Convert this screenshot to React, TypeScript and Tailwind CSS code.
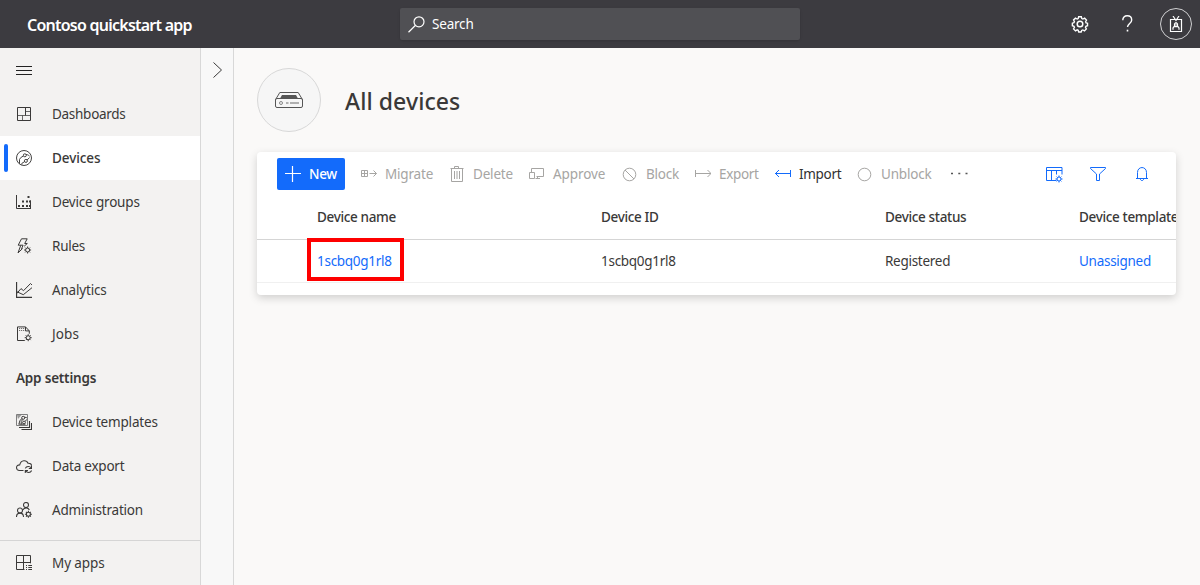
import React from "react";

type IconProps = { children: React.ReactNode; className?: string; size?: number; width?: number };

function Icon({ children, className = "", size = 16, width = 1 }: IconProps) {
  return (
    <svg
      width={size}
      height={size}
      viewBox={`0 0 ${size} ${size}`}
      fill="none"
      stroke="currentColor"
      strokeWidth={width}
      className={`block shrink-0 ${className}`}
    >
      {children}
    </svg>
  );
}

function Gear({ x, y }: { x: number; y: number }) {
  return (
    <g transform={`translate(${x} ${y})`}>
      <circle r="2" />
      <path d="M0-3.5v1.5M0 2v1.5M-3.5 0h1.5M2 0h1.5M-2.4-2.4l1 1M1.4 1.4l1 1M2.4-2.4l-1 1M-1.4 1.4l-1 1" />
    </g>
  );
}

const DashboardsIcon = (
  <Icon>
    <path d="M1.5 1.5h13v13h-13zM9.5 1.5v8" />
    <path d="M1.5 9.5h13M6.5 9.5v5M9.5 5.5h5" strokeOpacity="0.75" />
  </Icon>
);
const DevicesIcon = (
  <Icon width={0.95}>
    <circle cx="8" cy="8" r="7.5" />
    <circle cx="8.8" cy="5.3" r="1.5" />
    <circle cx="9.9" cy="10.9" r="1.5" />
    <path d="M7.4 6Q4 7.5 3.5 9.5v4.2M5.8 14.6v-1.2l2.7-1.7M10 4.6c2.2-.2 3 1.4 3.6 1.5M11.1 9.9l2.5-2.3" />
  </Icon>
);
const DeviceGroupsIcon = (
  <Icon>
    <path d="M.5 1v13.5h14.5M14.5 6.5v8" />
    <path d="M2 11h2v2H2zM6 11h2v2H6zM10 11h2v2h-2zM6 6.5h2v2H6zM10 6.5h2v2h-2zM11.5 2h2v2h-2zM13 11h2v2h-2zM13 6.5h2v2h-2z" fill="currentColor" stroke="none" />
  </Icon>
);
const RulesIcon = (
  <Icon width={1}>
    <path d="M5.5.8h5.7L8.7 5.5h2.6L8.2 8.2M5.5.8 2.2 7.2h2.6L2 14.9l4.6-4.4M4.8 7.2h2.3l-1.7 4" />
    <Gear x={11.6} y={12} />
  </Icon>
);
const AnalyticsIcon = (
  <Icon>
    <path d="M.5 0v15.5H16" strokeWidth="1.3" />
    <path d="M.8 11.5 5 6.6 7.5 8.7 14.5 1.5 16 3M.8 9.7l6.5 3 8.7-7" />
  </Icon>
);
const JobsIcon = (
  <Icon width={1}>
    <path d="M8.8 14.5H1.5V.9h8l3.8 4v2.8M9.5.9v4h3.8" />
    <path d="M3 2.5h1.2M5 2.5h1.2M7 2.5h1.2M3 4.5h1.2M5 4.5h1.2M7 4.5h1.2" strokeOpacity="0.7" />
    <Gear x={12.2} y={11.7} />
  </Icon>
);
const TemplatesIcon = (
  <Icon width={0.95}>
    <path d="M.5.5h11v11H.5z" stroke="#777" />
    <path d="M1 1h4.5L2 5z" fill="#999" stroke="none" />
    <circle cx="7.2" cy="3.8" r="1.5" />
    <circle cx="8" cy="8.5" r="1.4" />
    <path d="M6 4.7Q3.3 5.5 3 10M6.8 5.4Q4.5 7 5.2 10.5M9 7.3l2-1.8M8.3 3.1l2.5.6M2.5 10.2h7" />
    <path d="M13.5 7v6.5H3M15.5 9v6.5H5.5" strokeWidth="1.1" />
  </Icon>
);
const ExportIcon = (
  <Icon width={1.05}>
    <path d="M7.5 12.5h-4C-.5 12.3-.5 6.7 3.7 6.9 5 1.3 10.7 1.8 12 5.2c2-.2 3.6.9 3.5 2.6" />
    <path d="M9.3 10.4c1-2.6 4.6-2.6 6-.3M15.5 7.8v2.6h-2.7M15.6 12.5c-1.1 2.5-4.5 2.5-6 .2M9.3 15.1v-2.6H12" />
  </Icon>
);
const AdminIcon = (
  <Icon width={1.05}>
    <circle cx="10" cy="3" r="2.5" />
    <circle cx="4" cy="8.5" r="2.5" />
    <path d="M.5 15c0-5.2 7-5.2 7 0M6.8 8c1.4-2.7 5.6-2.7 6.5 0" />
    <Gear x={12.4} y={12.3} />
  </Icon>
);
const AppsIcon = (
  <Icon>
    <path d="M8.5 14.5h-8V.5h14v7.8M.5 7.5h14M7.5.5v14" />
    <path d="M10 10.5h1M12.3 10.5H16M10 12.5h1M12.3 12.5H16M10 14.5h1M12.3 14.5H16" />
  </Icon>
);

type NavItem = { label: string; icon: React.ReactNode; track: string; active?: boolean };

const navItems: NavItem[] = [
  { label: "Dashboards", icon: DashboardsIcon, track: "tracking-[-0.28px]" },
  { label: "Devices", icon: DevicesIcon, track: "tracking-[-0.1px]", active: true },
  { label: "Device groups", icon: DeviceGroupsIcon, track: "tracking-[-0.18px]" },
  { label: "Rules", icon: RulesIcon, track: "tracking-[-0.25px]" },
  { label: "Analytics", icon: AnalyticsIcon, track: "tracking-[-0.18px]" },
  { label: "Jobs", icon: JobsIcon, track: "tracking-[0.1px]" },
];
const settingsItems: NavItem[] = [
  { label: "Device templates", icon: TemplatesIcon, track: "tracking-[-0.18px]" },
  { label: "Data export", icon: ExportIcon, track: "tracking-[-0.22px]" },
  { label: "Administration", icon: AdminIcon, track: "tracking-[-0.22px]" },
];

function NavRow({ item }: { item: NavItem }) {
  return (
    <a className={`flex h-11 items-center ${item.active ? "bg-white font-medium" : ""}`}>
      <span className={`ml-1 h-7 w-1 rounded-xs ${item.active ? "bg-[#136bfb]" : ""}`} />
      <span className="ml-2">{item.icon}</span>
      <span className={`ml-5 whitespace-nowrap ${item.track}`}>{item.label}</span>
    </a>
  );
}

const commands = [
  {
    label: "Migrate", box: "w-[88px]", track: "tracking-[-0.18px]",
    icon: <Icon><path d="M.5 4.5h6v6h-6zM3.5 4.5v6M.5 7.5h6M8.5 7.5h7M12.5 4.5l3 3-3 3" /></Icon>,
  },
  {
    label: "Delete", box: "w-[80px]", track: "tracking-[-0.18px]",
    icon: <Icon><path d="M1.5 2.5h13M5.5 2.5v-2h4v2M2.5 2.5v13h11v-13M5.5 5v8M8 5v8M10.5 5v8" /></Icon>,
  },
  {
    label: "Approve", box: "w-[93px]", track: "tracking-[-0.1px]",
    icon: <Icon><path d="M2.5 6V2.5h12v8h-7M.5 6.5h5v6h-5zM8.5 10.5v2M6.5 12.5H11" /></Icon>,
  },
  {
    label: "Block", box: "w-[73px]", track: "tracking-[-0.22px]",
    icon: <Icon><circle cx="7.5" cy="8.5" r="6.3" /><path d="m3 4 9 9" /></Icon>,
  },
  {
    label: "Export", box: "w-[80px]", track: "tracking-[-0.32px]",
    icon: <Icon><path d="M.5 4v7M1 7.5h15M12.5 4 16 7.5 12.5 11" /></Icon>,
  },
  {
    label: "Import", box: "w-[82px]", track: "tracking-[-0.32px]", enabled: true,
    icon: <Icon><path d="M15.5 4v7M0 7.5h15M4 4 .5 7.5 4 11" stroke="#136bfb" /></Icon>,
  },
  {
    label: "Unblock", box: "w-[94px]", track: "tracking-[-0.18px]",
    icon: <Icon><circle cx="7.5" cy="8.5" r="6.3" /></Icon>,
  },
];

export default function App() {
  return (
    <div className="flex h-[585px] w-[1200px] flex-col overflow-hidden bg-[#faf9f8] font-['Noto_Sans','Open_Sans',sans-serif] text-[13.5px] leading-5 text-[#3a3938]">
      <header className="flex h-12 shrink-0 items-center bg-[#3c3b40] text-white">
        <h1 className="w-[400px] pl-[27px] pt-px text-base font-semibold tracking-[-0.76px]">Contoso quickstart app</h1>
        <div className="flex h-8 w-[400px] items-center rounded-xs bg-[#505054] pl-2 shadow-sm">
          <Icon size={17} width={1.2}>
            <circle cx="11" cy="5.8" r="5" />
            <path d="M7.3 9.5.5 16.2" />
          </Icon>
          <span className="ml-[7px] tracking-[-0.2px]">Search</span>
        </div>
        <div className="ml-auto flex items-center pr-2">
          <Icon size={18} width={1.5} className="-mr-px">
            <circle cx="9" cy="9" r="2.8" />
            <path d="M7.5 1.2h3l.5 2 1.2.5 1.9-1 2.1 2.1-1 1.9.5 1.1 1.6.4v2.8l-1.8.6-.5 1.1 1 1.8-2.1 2.2-1.8-1-1.2.5-.6 1.7H7.6l-.6-1.8-1.1-.5-1.8 1.1-2.2-2.1 1-1.9-.5-1.1-1.8-.6V8.2l1.8-.5.5-1.2-1-1.8 2.1-2 1.9 1L7 3.2z" transform="translate(.8 .7) scale(.91)" />
          </Icon>
          <Icon size={18} className="ml-[30px]" width={1.4}>
            <path d="M4.8 5.2C4.8 2.5 6.5.8 9.2.8s4.5 1.7 4.5 4.1c0 3.4-4.2 3.7-4.2 7.2" />
            <path d="M9.5 14.7v1.8" strokeWidth="1.6" />
          </Icon>
          <span className="ml-6 flex size-8 items-center justify-center rounded-full border border-[#d0d0d2]">
            <Icon width={1.2}>
              <path d="M2.5 3.5h11v12h-11z" />
              <path d="m5 0 3 4.5L11 0M5 13.8V12l1-1.3h4l1 1.3v1.8M6.5 11V8l1-1.2h1l1 1.2v3M6.5 9h3" />
            </Icon>
          </span>
        </div>
      </header>

      <div className="flex min-h-0 flex-1">
        <nav className="flex w-[201px] shrink-0 flex-col border-r border-[#d8d8d8] bg-[#f3f2f1]">
          <div className="flex h-11 items-center pl-4">
            <Icon><path d="M0 4.5h16M0 8.5h16M0 12.5h16" stroke="#222" /></Icon>
          </div>
          {navItems.map((item) => <NavRow key={item.label} item={item} />)}
          <div className="flex h-11 items-center pl-4 font-semibold tracking-[-0.2px]">App settings</div>
          {settingsItems.map((item) => <NavRow key={item.label} item={item} />)}
          <div className="mt-2 border-t border-[#d5d5d5]">
            <NavRow item={{ label: "My apps", icon: AppsIcon, track: "tracking-[-0.1px]" }} />
          </div>
        </nav>

        <aside className="flex w-[33px] shrink-0 justify-center border-r border-[#d8d8d8] bg-[#f8f8f8] pt-[14px]">
          <Icon><path d="m4.5.5 8 7.5-8 7.5" /></Icon>
        </aside>

        <main className="min-w-0 flex-1 pl-[23px] pr-6 pt-5">
          <div className="flex items-center">
            <div className="flex size-16 items-center justify-center rounded-full border border-[#d8d8d8] bg-[#f6f6f6]">
              <svg width="28" height="16" viewBox="0 0 28 16" fill="none" stroke="#555" className="block">
                <path d="M.6 7.5 4.8.5h18.4l4.2 7" />
                <rect x=".5" y="6.5" width="27" height="9" rx="1.5" />
                <path d="M7 3h14l2 3.5H5z" fill="#555" stroke="none" />
                <circle cx="6" cy="11" r="1.5" stroke="#888" />
                <path d="M11 11h2.5M15 11h9" stroke="#999" strokeWidth="1.5" />
              </svg>
            </div>
            <h2 className="ml-6 mt-0.5 text-[23px] font-medium leading-8 tracking-[0.08px]">All devices</h2>
          </div>

          <section className="mt-5 h-[143px] overflow-hidden rounded-[4px] bg-white shadow-[0_3px_8px_rgba(0,0,0,0.17)]">
            <div className="flex h-[44px] items-center pl-5">
              <button className="flex h-8 w-[68px] shrink-0 items-center rounded-xs bg-[#136bfb] pl-2 font-medium text-white">
                <Icon><path d="M0 7.5h16M7.5 0v16" strokeWidth="1.2" /></Icon>
                <span className="ml-2 tracking-[-0.3px]">New</span>
              </button>
              <div className="ml-4 flex items-center">
                {commands.map((c) => (
                  <div key={c.label} className={`flex shrink-0 items-center ${c.box} ${c.enabled ? "text-[#323130]" : "text-[#a6a5a3]"}`}>
                    {c.icon}
                    <span className={`ml-2 ${c.track}`}>{c.label}</span>
                  </div>
                ))}
                <Icon size={18} className="text-[#555]">
                  <path d="M0 8.5h2M7.3 8.5h2M14.5 8.5h2" strokeWidth="1.5" />
                </Icon>
              </div>
              <div className="ml-auto flex items-center gap-7 pr-[26px] text-[#136bfb]">
                <Icon size={17} className="-mr-px">
                  <path d="M10.5 14.5H.5v-13h15.5v7M.5 4.5H16M5.5 4.5v10M10.5 4.5v4" />
                  <Gear x={13} y={13} />
                </Icon>
                <Icon><path d="M.5 1.5h15v1l-6 5.5v6.5h-3V8l-6-5.5z" /></Icon>
                <Icon><path d="M2 12.5h12M3.5 12.5v-6c0-6.6 9-6.6 9 0v6M6.3 13c.5 2.1 2.9 2.1 3.4 0" /></Icon>
              </div>
            </div>
            <div className="grid h-[44px] grid-cols-[284px_284px_194px_120px] items-center border-b border-[#d5d5d5] pb-px pl-[60px] font-medium tracking-[-0.34px] whitespace-nowrap">
              <span>Device name</span>
              <span>Device ID</span>
              <span>Device status</span>
              <span>Device template</span>
            </div>
            <div className="grid h-[43px] grid-cols-[284px_284px_194px_120px] items-center border-b border-[#f0f0f0] pl-[60px] tracking-[-0.28px] whitespace-nowrap">
              <span className="relative text-[#136bfb]">
                1scbq0g1rl8
                <span className="absolute -left-[10px] -top-[13px] h-[43px] w-[97px] border-4 border-[#fe0000]" />
              </span>
              <span>1scbq0g1rl8</span>
              <span>Registered</span>
              <span className="text-[#136bfb]">Unassigned</span>
            </div>
          </section>
        </main>
      </div>
    </div>
  );
}
